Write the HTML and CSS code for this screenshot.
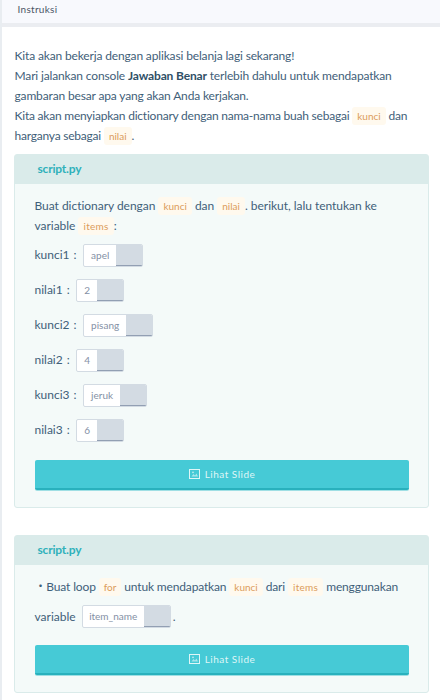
FILE: index.html
```html
<!DOCTYPE html>
<html lang="id">
<head>
<meta charset="utf-8">
<title>Instruksi</title>
<link rel="stylesheet" href="styles.css">
</head>
<body>
<svg class="defs" width="0" height="0"><symbol id="slide" viewBox="0 0 11 10"><rect x=".5" y=".5" width="10" height="9" fill="none" stroke="currentColor"/><path d="M2.5 7.5 4.5 5 6 6.5 7.5 4.5 9 7.5Z" fill="currentColor" opacity=".65"/><circle cx="4" cy="3.3" r=".9" fill="currentColor" opacity=".8"/></symbol></svg>
<header class="bar">Instruksi</header>
<main class="content">
  <div class="intro">
    <p>Kita akan bekerja dengan aplikasi belanja lagi sekarang!</p>
    <p>Mari jalankan console <strong>Jawaban Benar</strong> terlebih dahulu untuk mendapatkan<br>gambaran besar apa yang akan Anda kerjakan.</p>
    <p class="tight">Kita akan menyiapkan dictionary dengan nama-nama buah sebagai <code>kunci</code> dan<br>harganya sebagai <code>nilai</code>.</p>
  </div>
  <section class="panel">
    <h2>script.py</h2>
    <div class="body">
      <p class="wide">Buat dictionary dengan <code>kunci</code> dan <code>nilai</code>. berikut, lalu tentukan ke<br>variable <code class="loose">items</code>:</p>
      <div class="rows">
        <div class="row"><span>kunci1<span class="colon">:</span></span><span class="copy"><b>apel</b><i></i></span></div>
        <div class="row"><span>nilai1<span class="colon">:</span></span><span class="copy"><b>2</b><i></i></span></div>
        <div class="row"><span>kunci2<span class="colon">:</span></span><span class="copy"><b>pisang</b><i></i></span></div>
        <div class="row"><span>nilai2<span class="colon">:</span></span><span class="copy"><b>4</b><i></i></span></div>
        <div class="row"><span>kunci3<span class="colon">:</span></span><span class="copy"><b>jeruk</b><i></i></span></div>
        <div class="row"><span>nilai3<span class="colon">:</span></span><span class="copy"><b>6</b><i></i></span></div>
      </div>
      <button class="slide"><svg width="11" height="10"><use href="#slide"/></svg>Lihat Slide</button>
    </div>
  </section>
  <section class="panel second">
    <h2>script.py</h2>
    <div class="body">
      <p>・Buat loop <code>for</code> untuk mendapatkan <code>kunci</code> dari <code class="loose">items</code> menggunakan</p>
      <div class="row var"><span>variable</span><span class="copy"><b>item_name</b><i></i></span><span>.</span></div>
      <button class="slide"><svg width="11" height="10"><use href="#slide"/></svg>Lihat Slide</button>
    </div>
  </section>
</main>
</body>
</html>
```
FILE: styles.css
```css
* { box-sizing: border-box; }
html { overflow: hidden; }
body {
  margin: 0;
  height: 700px;
  overflow: hidden;
  background: #fff;
  border-left: 2px solid #e9edf1;
  color: #3f6079;
  font: 12px/20px Lato, "Noto Sans CJK JP", sans-serif;
}
.defs { position: absolute; }
.bar {
  height: 27px;
  padding: 0 15.5px;
  background: #f8f9fd;
  border-bottom: 4px solid #ebedf1;
  color: #4b5566;
  font-size: 10px;
  line-height: 19px;
  letter-spacing: .3px;
}
.content { padding: 19px 11px 0 12px; }
p { height: auto; margin: 0; padding-left: .5px; white-space: nowrap; letter-spacing: -.15px; }
.tight { letter-spacing: -.22px; }
.wide { letter-spacing: -.03px; }
strong { color: #2f4f66; }
code {
  display: inline-block;
  height: 18px;
  margin: -1px 0 0;
  padding: 0 5px;
  border-radius: 3px;
  background: #fff9ee;
  color: #dc9c5a;
  font: 10px/18px Lato, sans-serif;
  letter-spacing: 0;
  vertical-align: middle;
}
.loose { letter-spacing: .3px; }
.panel {
  height: 354px;
  margin-top: 8px;
  border: 1px solid #daebea;
  border-radius: 3px;
  background: #f4faf9;
}
.second { height: 158px; margin-top: 27px; }
h2 {
  height: 29px;
  margin: 0;
  padding-left: 22.5px;
  background: #daebea;
  color: #2fb1bb;
  font-size: 12px;
  line-height: 28px;
  letter-spacing: -.2px;
}
.body { padding: 12px 19px 0 19px; }
.rows { margin-top: 2px; }
.row { display: flex; align-items: center; height: 35px; padding-left: .5px; white-space: nowrap; }
.rows .row { align-items: flex-start; padding-top: 6px; }
.rows .row > span:first-child { margin-top: 1px; }
.colon { margin: 0 6.5px 0 4px; }
.copy {
  display: flex;
  height: 23px;
  border: 1px solid #d3dbe3;
  border-radius: 2px;
  background: #fff;
  overflow: hidden;
}
.copy b {
  padding: 0 7px;
  color: #8490a5;
  font-size: 10px;
  font-weight: 400;
  line-height: 21px;
}
.copy i {
  width: 27px;
  margin: -1px;
  margin-left: 0;
  background: #d3dbe3;
  border-bottom: 2px solid #929fb3;
}
.slide {
  display: flex;
  align-items: center;
  justify-content: center;
  gap: 5px;
  width: 374px;
  height: 30px;
  margin: 12px 0 0 1px;
  padding: 0 0 1px;
  border: 0;
  border-bottom: 2px solid #29b1bd;
  border-radius: 2px;
  background: #46cad6;
  box-shadow: 0 1px 0 #9fdfe4;
  color: #dff6f7;
  font: 10px/18px Lato, sans-serif;
  letter-spacing: .5px;
}
.var { margin-top: 2px; }
.var + .slide { margin-top: 11px; }
.var .copy { margin: 0 2px 0 6px; }
.var .copy b { padding: 0 6.5px; }
```
